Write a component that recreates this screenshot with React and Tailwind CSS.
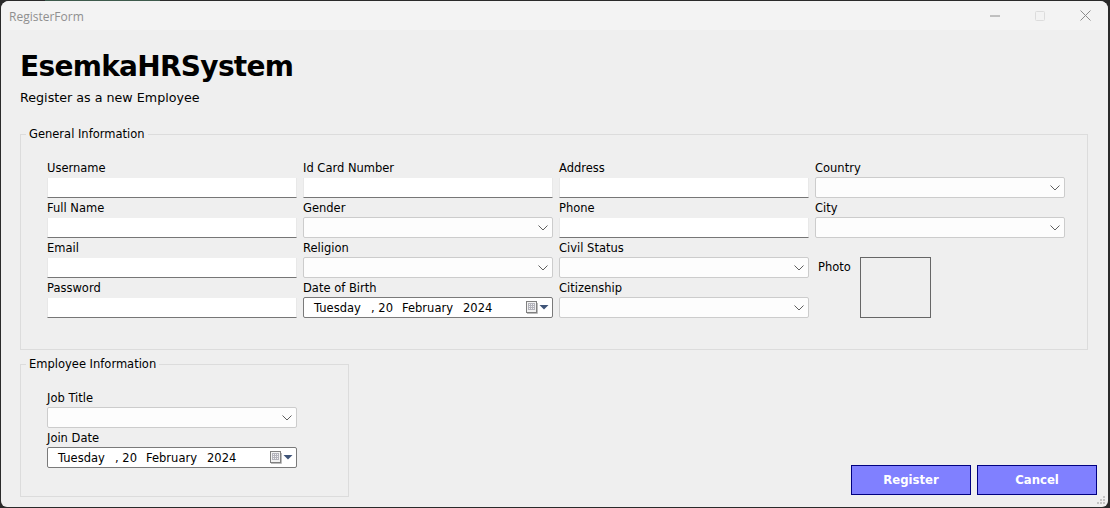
const font = { fontFamily: '"DejaVu Sans", sans-serif' };

function Chevron() {
  return (
    <svg width="10" height="6" viewBox="0 0 10 6" fill="none" className="shrink-0">
      <path d="M0.5 0.5 L5 5 L9.5 0.5" stroke="#5f5f5f" strokeWidth="1" />
    </svg>
  );
}

function Calendar() {
  return (
    <svg width="24" height="14" viewBox="0 0 24 14" className="shrink-0">
      <rect x="0.5" y="0.5" width="10" height="11" fill="#f2f2f2" stroke="#808080" />
      <path d="M2 2.5H9M2 4.5H9M2 6.5H9M2 8.5H9" stroke="#b4b4bc" strokeWidth="1" />
      <path d="M2.5 2V9M4.5 2V9M6.5 2V9M8.5 2V9" stroke="#b4b4bc" strokeWidth="1" />
      <path d="M1 12.5H11.5V2" fill="none" stroke="#bcbcbc" />
      <path d="M13.5 4H22.5L18 8.5Z" fill="#3f5478" />
    </svg>
  );
}

function Field({ label, children }) {
  return (
    <div className="flex flex-col h-[40px]">
      <label className="text-[11.5px] leading-[13px] h-[17px] pt-[1px] text-black">{label}</label>
      {children}
    </div>
  );
}

function TextBox() {
  return <div className="h-[20px] w-[250px] bg-white border-b border-[#767676] border-x border-x-[#e8e8e8] mb-[3px]" />;
}

function Select() {
  return (
    <div className="h-[21px] w-[250px] -mt-[1px] bg-[#fdfdfd] border border-[#cccccc] rounded-[2px] flex items-center justify-end pr-[4px]">
      <Chevron />
    </div>
  );
}

function DatePick() {
  return (
    <div className="h-[21px] w-[250px] -mt-[1px] bg-white border border-[#7a7a7a] rounded-[2px] flex items-center pl-[10px] pr-[2px] text-[11.5px] text-black">
      <span className="w-[57px] pt-[2px]">Tuesday</span>
      <span className="w-[31px] pt-[2px]">, 20</span>
      <span className="w-[61px] pt-[2px]">February</span>
      <span className="flex-1 pt-[2px]">2024</span>
      <Calendar />
    </div>
  );
}

function Group({ title, className, children }) {
  return (
    <fieldset className={`border border-[#dcdcdc] ${className}`}>
      <legend className="ml-[-21px] px-[3px] text-[11.5px] leading-[13px] text-black">{title}</legend>
      {children}
    </fieldset>
  );
}

export default function App() {
  return (
    <div className="relative w-[1110px] h-[508px] bg-[#2a2a2a] pl-[1px] pt-[1px] pr-[2px] pb-[1px] overflow-hidden" style={font}>
      <div className="absolute top-0 left-[45px] w-[115px] h-[1px] bg-[#3d5a4c]" />
      <div className="relative w-full h-full rounded-t-[8px] rounded-b-[6px] bg-[#efefef] flex flex-col overflow-hidden">
        <div className="h-[29px] shrink-0 bg-[#f3f3f3] flex items-center justify-between pl-[8px]">
          <span className="text-[12px] mt-[2px] text-[#8f8f8f]" style={{ fontFamily: '"Open Sans", sans-serif' }}>RegisterForm</span>
          <div className="flex items-center gap-[35px] pr-[17px]">
            <svg width="10" height="2" viewBox="0 0 10 2"><path d="M0 1H10" stroke="#8c8c8c" /></svg>
            <svg width="10" height="10" viewBox="0 0 10 10"><rect x="0.5" y="0.5" width="9" height="9" rx="1" fill="none" stroke="#dcdcdc" /></svg>
            <svg width="11" height="11" viewBox="0 0 11 11"><path d="M0.5 0.5L10.5 10.5M10.5 0.5L0.5 10.5" stroke="#8c8c8c" /></svg>
          </div>
        </div>

        <div className="flex-1 flex flex-col pl-[19px] pr-[11px]">
          <h1 className="text-[28px] tracking-[-0.7px] leading-[35px] font-bold text-black mt-[19px]">EsemkaHRSystem</h1>
          <p className="text-[12.7px] leading-[16px] text-black mt-[6px]">Register as a new Employee</p>

          <Group title="General Information" className="mt-[22px] mr-[9px] h-[222px] pl-[26px] pt-[20px]">
            <div className="grid grid-cols-[250px_250px_250px_250px] gap-x-[6px]">
              <Field label="Username"><TextBox /></Field>
              <Field label="Id Card Number"><TextBox /></Field>
              <Field label="Address"><TextBox /></Field>
              <Field label="Country"><Select /></Field>

              <Field label="Full Name"><TextBox /></Field>
              <Field label="Gender"><Select /></Field>
              <Field label="Phone"><TextBox /></Field>
              <Field label="City"><Select /></Field>

              <Field label="Email"><TextBox /></Field>
              <Field label="Religion"><Select /></Field>
              <Field label="Civil Status"><Select /></Field>
              <div className="row-span-2 flex items-start h-[61px] mt-[16px]">
                <span className="text-[11.5px] leading-[13px] ml-[3px] mt-[4px] w-[42px] text-black">Photo</span>
                <div className="w-[71px] h-[61px] border border-[#666666]" />
              </div>

              <Field label="Password"><TextBox /></Field>
              <Field label="Date of Birth"><DatePick /></Field>
              <Field label="Citizenship"><Select /></Field>
            </div>
          </Group>

          <div className="flex justify-between items-end mt-[8px]">
            <Group title="Employee Information" className="w-[329px] h-[139px] pl-[26px] pt-[20px]">
              <Field label="Job Title"><Select /></Field>
              <Field label="Join Date"><DatePick /></Field>
            </Group>
            <div className="flex gap-[6px] mb-[2px]">
              <button className="w-[120px] h-[30px] pt-[2px] bg-[#8080ff] border border-[#000080] text-white text-[11.7px] font-bold">Register</button>
              <button className="w-[120px] h-[30px] pt-[2px] bg-[#8080ff] border border-[#000080] text-white text-[11.7px] font-bold">Cancel</button>
            </div>
          </div>
        </div>

        <svg width="10" height="10" viewBox="0 0 10 10" className="absolute right-[1px] bottom-[1px]">
          <path d="M6 0h2v2H6zM3 3h2v2H3zM6 3h2v2H6zM0 6h2v2H0zM3 6h2v2H3zM6 6h2v2H6z" fill="#c4c4c4" />
        </svg>
      </div>
    </div>
  );
}
